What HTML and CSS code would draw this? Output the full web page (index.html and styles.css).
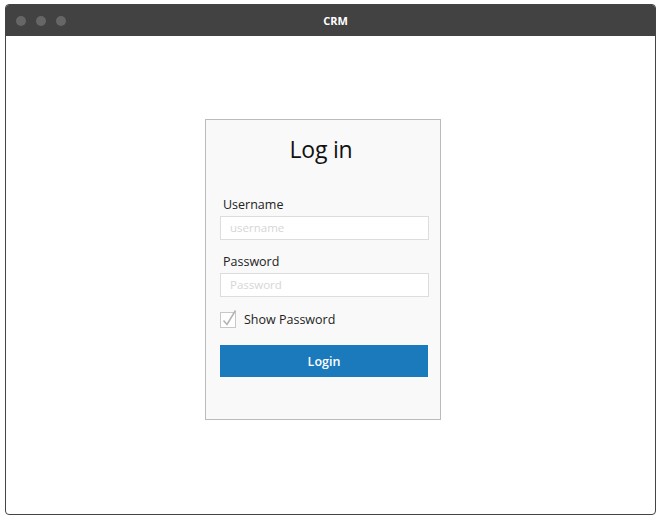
FILE: index.html
```html
<!DOCTYPE html>
<html>
<head>
<meta charset="utf-8">
<link rel="stylesheet" href="styles.css">
</head>
<body>
<div class="window">
  <div class="titlebar">
    <div class="dots"><span class="dot"></span><span class="dot"></span><span class="dot"></span></div>
    <div class="title">CRM</div>
  </div>
  <div class="content">
    <div class="card">
      <h1 class="heading">Log in</h1>
      <div class="field field-first">
        <div class="label">Username</div>
        <div class="input">username</div>
      </div>
      <div class="field field-next">
        <div class="label">Password</div>
        <div class="input">Password</div>
      </div>
      <div class="check">
        <svg class="box" width="17" height="20" viewBox="0 0 17 20">
          <rect x="0.5" y="4.5" width="15" height="15" fill="#fff" stroke="#c8c8c8"/>
          <path d="M3.5 12.5 L7 16.5 L15.5 2.5" fill="none" stroke="#b4b4b4" stroke-width="1.6"/>
        </svg>
        <span class="check-label">Show Password</span>
      </div>
      <div class="button">Login</div>
    </div>
  </div>
</div>
</body>
</html>
```
FILE: styles.css
```css
html, body {
  margin: 0;
  padding: 0;
  background: #fff;
}
body {
  font-family: "Open Sans", "Noto Sans", sans-serif;
}
.window {
  margin: 4px 0 0 5px;
  width: 651px;
  height: 511px;
  box-sizing: border-box;
  border: 1px solid #444;
  border-radius: 4px;
  overflow: hidden;
  display: flex;
  flex-direction: column;
}
.titlebar {
  height: 31px;
  background: #424242;
  display: flex;
  align-items: center;
  position: relative;
  flex: none;
}
.dots {
  display: flex;
  gap: 10px;
  padding-left: 10px;
}
.dot {
  width: 10px;
  height: 10px;
  border-radius: 50%;
  background: #666;
}
.title {
  position: absolute;
  left: 0;
  right: 0;
  top: 0;
  bottom: 0;
  text-align: center;
  line-height: 31px;
  color: #fff;
  font-size: 11px;
  font-weight: bold;
  padding-left: 10px;
}
.content {
  flex: 1;
  padding: 83px 0 0 199px;
}
.card {
  height: 299px;
  border: 1px solid #bbb;
  background: #f9f9f9;
  padding: 0 12px 0 14px;
  box-sizing: content-box;
  width: 208px;
}
.heading {
  margin: 13px 0 0 0;
  font-weight: normal;
  font-size: 23px;
  line-height: 32px;
  text-align: center;
  color: #111;
  letter-spacing: -0.2px;
  padding-right: 6px;
}
.field-first {
  margin-top: 31px;
}
.field-next {
  margin-top: 13px;
}
.label {
  font-size: 12.5px;
  color: #222;
  padding-left: 3px;
  line-height: 18px;
}
.input {
  height: 22px;
  border: 1px solid #ddd;
  background: #fff;
  font-size: 11.5px;
  line-height: 22px;
  color: #d6d6d6;
  padding-left: 9px;
  margin-top: 2px;
  width: 198px;
}
.check {
  display: flex;
  align-items: flex-end;
  margin-top: 11px;
  height: 20px;
}
.box {
  display: block;
}
.check-label {
  margin-left: 7px;
  font-size: 12.5px;
  color: #222;
  line-height: 17px;
}
.button {
  margin-top: 17px;
  width: 208px;
  height: 32px;
  box-sizing: border-box;
  padding-top: 2px;
  background: #1a7abc;
  color: #fff;
  font-weight: 600;
  font-size: 12.5px;
  line-height: 30px;
  text-align: center;
}
```
